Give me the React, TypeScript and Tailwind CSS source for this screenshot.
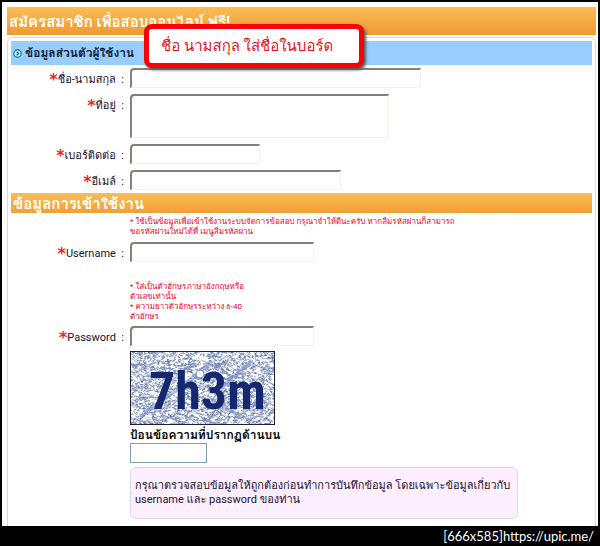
import type { ReactNode } from 'react';

const field =
  'block h-5 max-w-full rounded-tl-sm border-t-2 border-l-2 border-r border-b border-t-[#83817b] border-l-[#83817b] border-r-[#f5f3ec] border-b-[#f5f3ec] bg-white px-1 text-xs outline-none';

interface RowProps {
  id: string;
  label: string;
  children: ReactNode;
}

function Row({ id, label, children }: RowProps) {
  return (
    <div className="grid grid-cols-[113px_1fr] items-start gap-x-1.5">
      <label htmlFor={id} className="flex justify-end pt-1 text-[11px] leading-4 whitespace-nowrap text-[#1c1030]">
        <span className="font-['DejaVu_Sans',sans-serif] text-[16px] leading-4 font-bold text-[#fb1c1c]">*</span>
        {label}&nbsp;&nbsp;:
      </label>
      <div>{children}</div>
    </div>
  );
}

function Hint({ children }: { children: ReactNode }) {
  return <p className="ml-[119px] text-[8px] leading-[10px] whitespace-nowrap text-[#f0001c]">{children}</p>;
}

// repeatable noise so the captcha always looks the same
function noise(count: number, seed: number, len: number) {
  let s = seed;
  const next = () => {
    s = (s * 16807) % 2147483647;
    return s / 2147483647;
  };
  let d = '';
  for (let i = 0; i < count; i++) {
    const x = next() * 144;
    const y = next() * 74;
    const a = (next() - 0.5) * 1.6;
    const l = 1 + next() * len;
    d += `M${x.toFixed(1)} ${y.toFixed(1)}l${(Math.cos(a) * l).toFixed(1)} ${(Math.sin(a) * l).toFixed(1)}`;
  }
  return d;
}

function Captcha() {
  return (
    <svg width="145" height="74" viewBox="0 0 145 74" role="img" aria-label="captcha" className="block">
      <rect width="145" height="74" fill="#fdfeff" />
      <path d={noise(2600, 71, 2)} stroke="#5b6c9c" strokeWidth="0.8" fill="none" />
      <path d={noise(380, 913, 8)} stroke="#8796c4" strokeWidth="0.7" fill="none" />
      <path d={noise(45, 47, 34)} stroke="#6f84c4" strokeWidth="0.8" fill="none" />
      <path d="M50 38L82 10M92 36L122 10M14 62L48 38M82 50L112 66" stroke="#8093cf" strokeWidth="4" opacity="0.55" />
      <circle cx="70" cy="23" r="4" fill="#f4f7ff" stroke="#7f90c8" />
      <text
        x="19"
        y="58"
        fontFamily="'Liberation Sans Narrow', 'Roboto Condensed', 'Liberation Mono', monospace"
        fontWeight="700"
        fontSize="52"
        fill="#14286f"
      >
        7h3m
      </text>
      <rect x="0.5" y="0.5" width="144" height="73" fill="none" stroke="#1b2233" />
    </svg>
  );
}

function BulletIcon() {
  return (
    <svg width="9" height="9" viewBox="0 0 9 9" aria-hidden="true" className="shrink-0">
      <circle cx="4.5" cy="4.5" r="3.7" fill="#d9fbff" stroke="#108a9c" strokeWidth="1.4" />
      <path d="M3.6 2.6L5.6 4.5L3.6 6.4" fill="none" stroke="#075a70" strokeWidth="1.3" />
    </svg>
  );
}

export default function App() {
  return (
    <div className="min-h-screen bg-black px-0.5 pt-0.5 font-[Roboto,Waree,Loma,Garuda,'Noto_Sans_Thai_Looped',sans-serif]">
      <main className="bg-white pt-[5px] pr-0.5 pl-[5px]">
        <div className="relative">
          <h1 className="h-7 bg-linear-to-b from-[#fabc55] to-[#ef9a2e] pl-0.5 text-[15px] leading-[30px] font-bold text-white">
            สมัครสมาชิก เพื่อสอบออนไลน์ ฟรี!
          </h1>
          <div className="absolute top-[17px] left-[137px] w-[220px] rounded-lg border-5 border-[#fb0007] bg-white px-3 py-1 text-[15px] leading-[26px] whitespace-nowrap text-[#e8101c] shadow-[2px_2px_3px_#555]">
            ชื่อ นามสกุล ใส่ชื่อในบอร์ด
          </div>
        </div>

        <form className="mt-0.5 rounded-t-md border-x border-t border-[#d5d9ee] px-[3px] pt-[3px] pb-[7px]">
          <h2 className="flex h-6 items-center gap-[3px] bg-[#99ccff] pl-0.5 text-[12px] font-bold text-[#101830]">
            <BulletIcon />
            ข้อมูลส่วนตัวผู้ใช้งาน
          </h2>

          <div className="mt-[3px] flex flex-col gap-1.5">
            <Row id="name" label="ชื่อ-นามสกุล">
              <input id="name" className={`${field} w-[291px]`} />
            </Row>
            <Row id="address" label="ที่อยู่">
              <textarea id="address" className={`${field} h-11! w-[259px] resize-none`} />
            </Row>
            <Row id="phone" label="เบอร์ติดต่อ">
              <input id="phone" className={`${field} w-[130px]`} />
            </Row>
            <Row id="email" label="อีเมล์">
              <input id="email" type="email" className={`${field} w-[211px]`} />
            </Row>
          </div>

          <h2 className="mt-[3px] h-5 bg-linear-to-b from-[#f9bd55] to-[#f2a036] pl-0.5 text-[15px] leading-[22px] font-bold text-white">
            ข้อมูลการเข้าใช้งาน
          </h2>

          <div className="mt-1 mb-[5px]">
            <Hint>
              * ใช้เป็นข้อมูลเพื่อเข้าใช้งานระบบจัดการข้อสอบ กรุณาจำให้ดีนะครับ หากลืมรหัสผ่านก็สามารถ
              <br />
              ขอรหัสผ่านใหม่ได้ที่ เมนูลืมรหัสผ่าน
            </Hint>
          </div>
          <Row id="username" label="Username">
            <input id="username" className={`${field} w-[184px]`} />
          </Row>
          <div className="mt-5 mb-1">
            <Hint>
              * ใส่เป็นตัวอักษรภาษาอังกฤษหรือ
              <br />
              ตัวเลขเท่านั้น
              <br />
              * ความยาวตัวอักษรระหว่าง 6-40
              <br />
              ตัวอักษร
            </Hint>
          </div>
          <Row id="password" label="Password">
            <input id="password" type="password" className={`${field} w-[184px]`} />
          </Row>

          <div className="mt-[5px] ml-[119px]">
            <Captcha />
            <label htmlFor="captcha" className="mt-0.5 block text-[12px] leading-4 font-bold text-black">
              ป้อนข้อความที่ปรากฏด้านบน
            </label>
            <input id="captcha" className="block h-5 w-[77px] border border-[#7f9db9] bg-white px-1 text-xs outline-none" />
            <p className="mt-1 w-[388px] max-w-full rounded-md border border-[#d5d9ee] bg-[#fdefff] px-1 py-[11px] text-[11px] leading-[14px] text-[#1c1030]">
              กรุณาตรวจสอบข้อมูลให้ถูกต้องก่อนทำการบันทึกข้อมูล โดยเฉพาะข้อมูลเกี่ยวกับ
              <br />
              username และ password ของท่าน
            </p>
          </div>
        </form>
      </main>
      <footer className="pr-1 text-right font-[Lato,sans-serif] text-[13px] leading-5 text-white">
        [666x585]<a href="https://upic.me/">https://upic.me/</a>
      </footer>
    </div>
  );
}
